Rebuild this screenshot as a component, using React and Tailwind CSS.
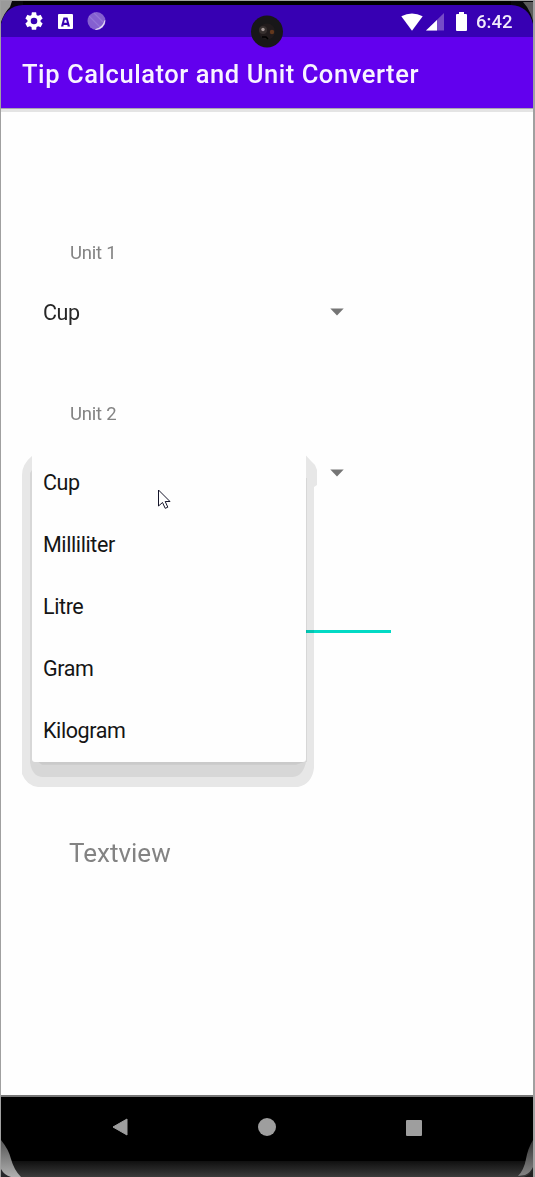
import React from "react";

const units = ["Cup", "Milliliter", "Litre", "Gram", "Kilogram"];

function StatusBar() {
  return (
    <div className="flex h-8 shrink-0 items-center bg-[#3700b3] pl-[22px] pr-[20px]">
      <svg className="h-[22px] w-[22px]" viewBox="0 0 24 24" fill="#fff">
        <path d="M19.14 12.94c.04-.3.06-.61.06-.94 0-.32-.02-.64-.07-.94l2.03-1.58a.49.49 0 0 0 .12-.61l-1.92-3.32a.49.49 0 0 0-.59-.22l-2.39.96a7 7 0 0 0-1.62-.94l-.36-2.54a.48.48 0 0 0-.48-.41h-3.84a.48.48 0 0 0-.47.41l-.36 2.54c-.59.24-1.13.57-1.62.94l-2.39-.96a.48.48 0 0 0-.59.22L2.74 8.87a.48.48 0 0 0 .12.61l2.03 1.58c-.05.3-.09.63-.09.94s.02.64.07.94l-2.03 1.58a.49.49 0 0 0-.12.61l1.92 3.32c.12.22.37.29.59.22l2.39-.96c.5.38 1.03.7 1.62.94l.36 2.54c.05.24.24.41.48.41h3.84c.24 0 .44-.17.47-.41l.36-2.54a6.6 6.6 0 0 0 1.62-.94l2.39.96c.22.08.47 0 .59-.22l1.92-3.32a.48.48 0 0 0-.12-.61zM12 15.6a3.6 3.6 0 1 1 0-7.2 3.6 3.6 0 0 1 0 7.2z" />
      </svg>
      <svg className="ml-[13px] h-[15px] w-[15px]" viewBox="0 0 15 15">
        <path fill="#fff" fillRule="evenodd" d="M1 0H14Q15 0 15 1V14Q15 15 14 15H1Q0 15 0 14V1Q0 0 1 0ZM5.500 3.500L3 12.500H5.500V11H9.500V12.500H12L9.500 3.500ZM6.800 5.800H8.200L8.900 8.800H6.100Z" />
      </svg>
      <svg className="ml-[13px] h-[20px] w-[20px]" viewBox="0 0 20 20">
        <circle cx="10.500" cy="10" r="9" fill="#8560d0" />
        <path d="M3 5L15 17M8 2L17 11" fill="none" stroke="#9474d8" strokeWidth="1.200" />
        <path d="M18.800 9.500A8.800 8.800 0 0 1 9.500 18.500Q17 16.500 18.800 9.500Z" fill="#fff" stroke="#e8dff8" strokeWidth=".6" />
      </svg>
      <div className="ml-auto flex items-center">
        <svg className="h-[19px] w-[57px]" viewBox="0 0 57 19">
          <path d="M.3 3.500Q11 -2 21.700 3.500L11 18Z" fill="#fff" transform="translate(0 .8)" />
          <path d="M43 1V18.500H25Z" fill="#764bc7" />
          <path d="M36 8V18.500H25Z" fill="#fff" />
        </svg>
        <svg className="-ml-[2px] h-[19px] w-[11px]" viewBox="0 0 11 19">
          <path d="M3 0H8V2H10Q11 2 11 3V18Q11 19 10 19H1Q0 19 0 18V3Q0 2 1 2H3Z" fill="#fff" />
        </svg>
        <span className="ml-[9px] w-[37px] whitespace-nowrap pt-px text-[18.500px] font-medium leading-[20px] text-[#f1ebfb]">6:42</span>
      </div>
    </div>
  );
}

function Camera() {
  return (
    <svg className="absolute left-[249px] top-[13px] h-[34px] w-[34px]" viewBox="0 0 34 34">
      <circle cx="17" cy="17.500" r="16" fill="#181719" />
      <circle cx="17" cy="17.500" r="8" fill="#211b1c" />
      <circle cx="13" cy="16" r="4" fill="#37302f" />
      <circle cx="13" cy="15.500" r="1.700" fill="#a69a98" />
      <circle cx="22" cy="18" r="2.200" fill="#63381d" />
      <path d="M12 23h4l2 2" stroke="#000" strokeWidth="1.500" fill="none" />
    </svg>
  );
}

function Arrow() {
  return (
    <svg className="ml-auto h-[8px] w-[14px]" viewBox="0 0 14 8">
      <path d="M.3 .5H13.700L7 7.500Z" fill="#757575" />
    </svg>
  );
}

function Spinner({ value }) {
  return (
    <div className="flex h-[32px] w-[301.500px] items-center text-[21.500px] tracking-[-0.450px] text-[#272727]">
      {value && <span className="pl-px pt-[2px] leading-[32px]">{value}</span>}
      <Arrow />
    </div>
  );
}

function Menu() {
  return (
    <>
      <svg className="absolute left-[21px] top-[449px] h-[340px] w-[298px] mix-blend-multiply" viewBox="22 450 298 340">
        <path fill="#e8e8e8" d="M32.500 455.500Q22 464 22 475V774Q27 786 38 787H298Q312 784 314 768V487L317 485V470L315 465L311 461L306 455.500Z" />
        <path fill="#d8d8d8" d="M32 470L30 473V762Q32 777 43 777H293Q303 776 306 762H307V478H306Z" />
        <path fill="#cbcbcb" d="M33 758H306L304 762L296 764.700H42Z" />
      </svg>
      <div className="absolute left-[31px] top-[450px] h-[311px] w-[274px]">
        <ul className="h-[311px] rounded-b-[3px] bg-[#fefefe] pt-px">
          {units.map((unit) => (
            <li key={unit} className="flex h-[62px] items-center pl-[11px] text-[21.500px] leading-[26px] tracking-[-0.400px] text-[#151515]">
              {unit}
            </li>
          ))}
        </ul>
        <svg className="absolute left-[126px] top-[38px] h-[21px] w-[14px]" viewBox="0 0 14 21">
          <path d="M.5 1V17L4.500 13.500L7.200 19.300L9.800 18.200L7.200 12.500H12Z" fill="#fff" stroke="#15152a" strokeWidth="1" />
        </svg>
      </div>
    </>
  );
}

function NavBar() {
  return (
    <div className="relative flex h-[82px] shrink-0 flex-col overflow-hidden border-t-2 border-[#777] bg-black">
      <div className="flex h-[60px] items-center pl-[111px]">
        <svg className="h-[18px] w-[16px]" viewBox="0 0 16 18">
          <path d="M15 1V17L1 9Z" fill="#9e9e9e" stroke="#9e9e9e" strokeLinejoin="round" />
        </svg>
        <div className="ml-[130px] size-[18px] rounded-full bg-[#9e9e9e]" />
        <div className="ml-[130px] mt-px size-[16px] rounded-[1px] bg-[#9e9e9e]" />
      </div>
      <div className="mt-auto h-[16px] bg-linear-to-b from-[#101010] to-[#3c3c3c]" />
      <svg className="absolute bottom-0 left-0 h-[38px] w-[22px]" viewBox="0 0 22 38">
        <defs>
          <linearGradient id="edgeLeft" x1="0" y1="0" x2="0" y2="1">
            <stop offset="0" stopColor="#555" />
            <stop offset="1" stopColor="#b0b0b0" />
          </linearGradient>
        </defs>
        <path d="M0 1Q8 11 10 20Q13 31 20 38H0Z" fill="url(#edgeLeft)" />
        <path d="M0 30Q3 36 10 38H0Z" fill="#26262a" />
      </svg>
      <svg className="absolute bottom-0 right-0 h-[38px] w-[22px]" viewBox="0 0 22 38">
        <defs>
          <linearGradient id="edgeRight" x1="0" y1="0" x2="0" y2="1">
            <stop offset="0" stopColor="#333" />
            <stop offset="1" stopColor="#858585" />
          </linearGradient>
        </defs>
        <path d="M22 1Q17 9 15 20Q13 31 7 37L14 36Q20 33 22 28Z" fill="url(#edgeRight)" />
        <path d="M22 30Q19 36 13 38H22Z" fill="#202020" />
      </svg>
    </div>
  );
}

export default function App() {
  return (
    <div className="relative flex h-[1177px] w-[535px] flex-col overflow-hidden border-l border-r-2 border-t border-[#a0a0a0] bg-[#fefefe] font-[Roboto,sans-serif]">
      <div className="h-[4px] shrink-0 bg-black" />
      <StatusBar />
      <svg className="absolute left-0 top-0 h-[24px] w-[22px]" viewBox="0 0 22 24">
        <path d="M0 0H22V4Q4 5 0 23Z" fill="#08080c" />
        <path d="M0 0H11L9 6Q3 12 0 21Z" fill="#9a9a9a" />
      </svg>
      <svg className="absolute right-0 top-0 h-[24px] w-[22px]" viewBox="0 0 22 24">
        <path d="M22 0H0V4Q18 5 22 23Z" fill="#08080c" />
        <path d="M22 1H12L16 6Q20 12 22 20Z" fill="#5c5c5c" />
      </svg>
      <Camera />
      <header className="flex h-[71px] shrink-0 items-center bg-[#6200ee] pl-[21px]">
        <h1 className="whitespace-nowrap pt-[3px] text-[25.500px] font-medium leading-[30px] tracking-[0.560px] text-[#f8f3ff]">
          Tip Calculator and Unit Converter
        </h1>
      </header>
      <div className="h-px shrink-0 bg-[#a9a5ae]" />
      <div className="h-[3px] shrink-0 bg-[#e4e4e4]" />
      <main className="flex flex-1 flex-col text-[#838383]">
        <p className="mt-[128px] pl-[69px] text-[18.500px] leading-[26px] tracking-[-0.200px]">Unit 1</p>
        <div className="mt-[30px] pl-[41px]">
          <Spinner value="Cup" />
        </div>
        <p className="mt-[73px] pl-[69px] text-[18.500px] leading-[26px] tracking-[-0.200px]">Unit 2</p>
        <div className="mt-[30px] pl-[41px]">
          <Spinner />
        </div>
        <div className="ml-[68px] mt-[141px] h-[3px] w-[322px] bg-[#03dac5]" />
        <p className="mt-[203px] pl-[68px] text-[26px] leading-[34px]">Textview</p>
      </main>
      <Menu />
      <NavBar />
    </div>
  );
}
